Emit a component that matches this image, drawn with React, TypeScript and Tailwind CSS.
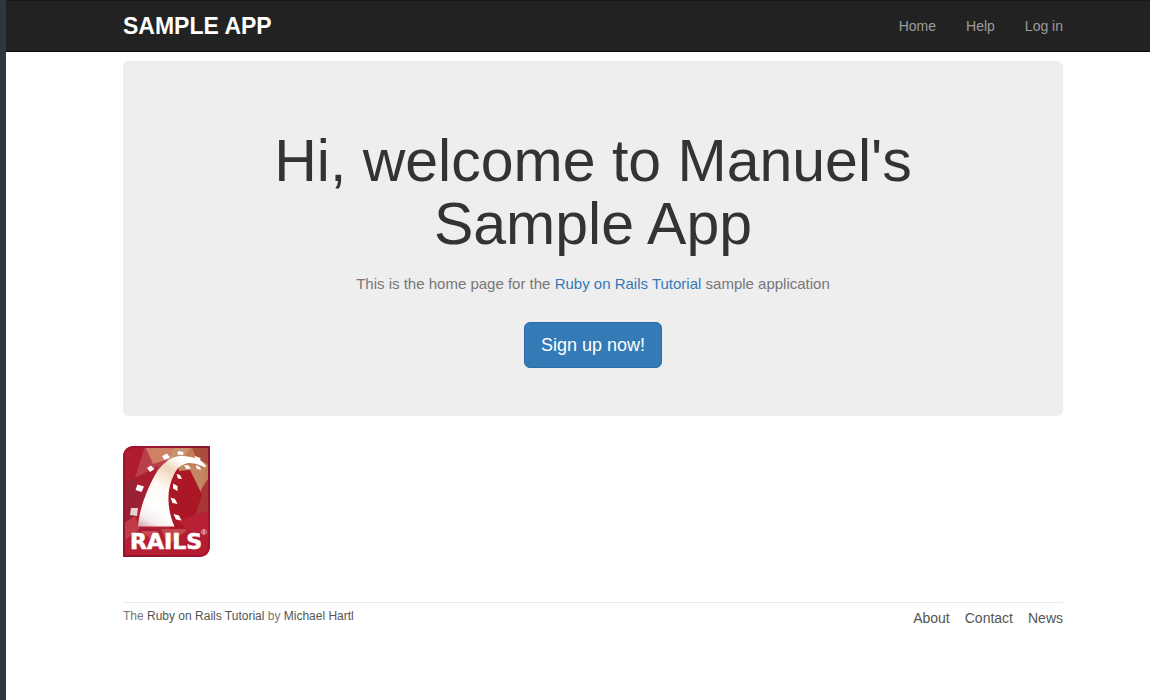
import type { ReactNode } from 'react';

function Container({ children, className = '' }: { children: ReactNode; className?: string }) {
  return (
    <div className="pl-[30px]">
      <div className={`mx-auto w-full max-w-[940px] ${className}`}>{children}</div>
    </div>
  );
}

function RailsLogo() {
  return (
    <svg width="87" height="111" viewBox="0 0 87 111" role="img" aria-label="Rails logo">
      <defs>
        <linearGradient id="frame" x1="0" y1="0" x2="1" y2="1">
          <stop offset="0" stopColor="#a5142c" />
          <stop offset="0.5" stopColor="#8b1530" />
          <stop offset="1" stopColor="#a5142c" />
        </linearGradient>
        <linearGradient id="gold" x1="0" y1="1" x2="1" y2="0">
          <stop offset="0" stopColor="#b5202f" />
          <stop offset="0.5" stopColor="#c77955" />
          <stop offset="1" stopColor="#bd8356" />
        </linearGradient>
        <linearGradient id="track" gradientUnits="userSpaceOnUse" x1="18" y1="81" x2="60" y2="10">
          <stop offset="0" stopColor="#d9a9ae" />
          <stop offset="0.12" stopColor="#f6eced" />
          <stop offset="0.3" stopColor="#ffffff" />
          <stop offset="0.55" stopColor="#fffaf3" />
          <stop offset="0.78" stopColor="#efd5bd" />
          <stop offset="0.94" stopColor="#ffffff" />
        </linearGradient>
        <clipPath id="badge">
          <path d="M12 2H85V99Q85 109 75 109H2V12Q2 2 12 2Z" />
        </clipPath>
      </defs>
      <path d="M12 0H87V99Q87 111 75 111H0V12Q0 0 12 0Z" fill="url(#frame)" />
      <g clipPath="url(#badge)">
        <path d="M0 0H87V111H0Z" fill="#b32033" />
        <path d="M0 0H22L12 32L0 42Z" fill="#ae1c2e" />
        <path d="M22 0H53L36 25L12 32Z" fill="#b9404a" />
        <path d="M22 0H55L43 14L30 18Z" fill="#cf8067" />
        <path d="M12 32L35 20L20 57L0 62V42Z" fill="#a91f30" />
        <path d="M0 39L12 32L20 52L10 80H0Z" fill="#982234" />
        <path d="M0 78L12 70L18 88L0 96Z" fill="#c33b47" />
        <path d="M0 96L18 82L38 83L28 111H0Z" fill="#a51d31" />
        <path d="M50 0H87V62L67 43L55 18Z" fill="url(#gold)" />
        <path d="M53 0H68L61 12L43 15Z" fill="#c9936f" />
        <path d="M68 0H87V20L73 11Z" fill="#a94e3c" />
        <path d="M75 21L87 34V66L73 45Z" fill="#c3815b" />
        <path d="M77 45L87 30V75L70 80Z" fill="#aa3537" />
        <path d="M44 28L56 19L68 24L79 49L67 84H48L41 62Z" fill="#ab1724" />
        <path d="M55 17L82 22L78 46L67 24L56 25Z" fill="#c48663" />
        <path d="M54 75L87 64V96L66 84Z" fill="#b91f35" />
        <path d="M38 83H64L55 96L47 104Z" fill="#c2494b" />
        <path d="M0 96L20 85L37 90L50 111H0Z" fill="#b81e34" />
        <path d="M48 97L64 84L87 91V111H40Z" fill="#b31d33" />
        <path d="M18 85H35L28 93Z" fill="#ca4650" />
      </g>
      <path d="M10 .8H86.2V99Q86.2 110.2 75 110.2H.8V12Q.8 .8 12 .8Z" fill="none" stroke="url(#frame)" strokeWidth="1.6" />
      <path d="M15 80.5C16 66 22 47 32 29C38 19 46 11 57 10C68 9.5 79 13 83 20Q83 22.5 79 20Q72 16.5 65 17Q58 18.5 53.5 24C48.5 32 46 41 45.5 50C45 62 48 73 51.5 80.5Z" fill="url(#track)" />
      <g fill="white">
        <path d="M39 10L44 7.5L47 11.5L41.5 14Z" />
        <path d="M24 22L28 19.5L31.5 23L27 26Z" />
        <path d="M14.5 38.5L21 40.5L18.5 46L12.5 44Z" />
        <path d="M55 5L60.5 6L60 9L54.5 8.5Z" />
        <path d="M72 10L77.5 12L77 15L72 12.5Z" />
        <path d="M61 19.5L65 19L68 22.5L63.5 23Z" />
        <path d="M73 19L77 21L78 24L73.5 22.5Z" />
        <path d="M53.5 28L57 29L59 33L55 32.5Z" />
        <path d="M50 37.5L54.5 40L54.5 45L50 42.5Z" />
        <path d="M47.5 51.5L52 53L54.5 58L49.5 57Z" />
        <path d="M50.5 68L56 69.5L58.5 74.5L53 73.5Z" />
      </g>
      <path d="M8 62L15 62L14 70L7 69Z" fill="#ead0d1" />
      <text x="7" y="103" fill="white" stroke="white" strokeWidth="0.6" fontSize="22" fontWeight="700" fontFamily="DejaVu Sans, sans-serif">RAILS</text>
      <text x="78" y="89" fill="white" fontSize="8" fontFamily="Liberation Sans, sans-serif">®</text>
    </svg>
  );
}

const navLinks = ['Home', 'Help', 'Log in'];
const footerLinks = ['About', 'Contact', 'News'];

export default function App() {
  return (
    <div className="min-h-screen border-l-6 border-[#31363b] bg-white font-['Liberation_Sans',Arial,sans-serif] text-sm leading-5 text-[#333]">
      <header className="border-t border-b border-t-[#191919] border-b-[#080808] bg-[#222]">
        <Container className="flex h-[50px] items-center justify-between">
          <a href="#home" className="text-[23px] leading-6 font-bold text-white">SAMPLE APP</a>
          <nav>
            <ul className="flex gap-[30px]">
              {navLinks.map((label) => (
                <li key={label}><a href="#" className="text-[#9d9d9d]">{label}</a></li>
              ))}
            </ul>
          </nav>
        </Container>
      </header>
      <Container className="pt-[9px]">
        <main>
          <section className="rounded-md bg-[#eee] px-[60px] pt-[69px] pb-12 text-center">
            <h1 className="mx-auto max-w-[700px] text-[59px] leading-[63px]">Hi, welcome to Manuel's Sample App</h1>
            <h2 className="mt-4 mb-[27px] text-[15px] leading-[23px] text-[#777]">
              This is the home page for the <a href="#tutorial" className="text-[#337ab7]">Ruby on Rails Tutorial</a> sample application
            </h2>
            <a href="#signup" className="inline-block rounded-md border border-[#2e6da4] bg-[#337ab7] px-4 py-2.5 text-lg leading-6 text-white">Sign up now!</a>
          </section>
          <a href="#rails" className="mt-[30px] inline-block align-top"><RailsLogo /></a>
        </main>
        <footer className="mt-[45px] flex justify-between border-t border-[#eaeaea] pt-[5px] text-[#777]">
          <small className="text-xs leading-4">
            The <a href="#tutorial" className="text-[#555]">Ruby on Rails Tutorial</a> by <a href="#author" className="text-[#555]">Michael Hartl</a>
          </small>
          <nav>
            <ul className="flex gap-[15px]">
              {footerLinks.map((label) => (
                <li key={label}><a href="#" className="text-[#555]">{label}</a></li>
              ))}
            </ul>
          </nav>
        </footer>
      </Container>
    </div>
  );
}
